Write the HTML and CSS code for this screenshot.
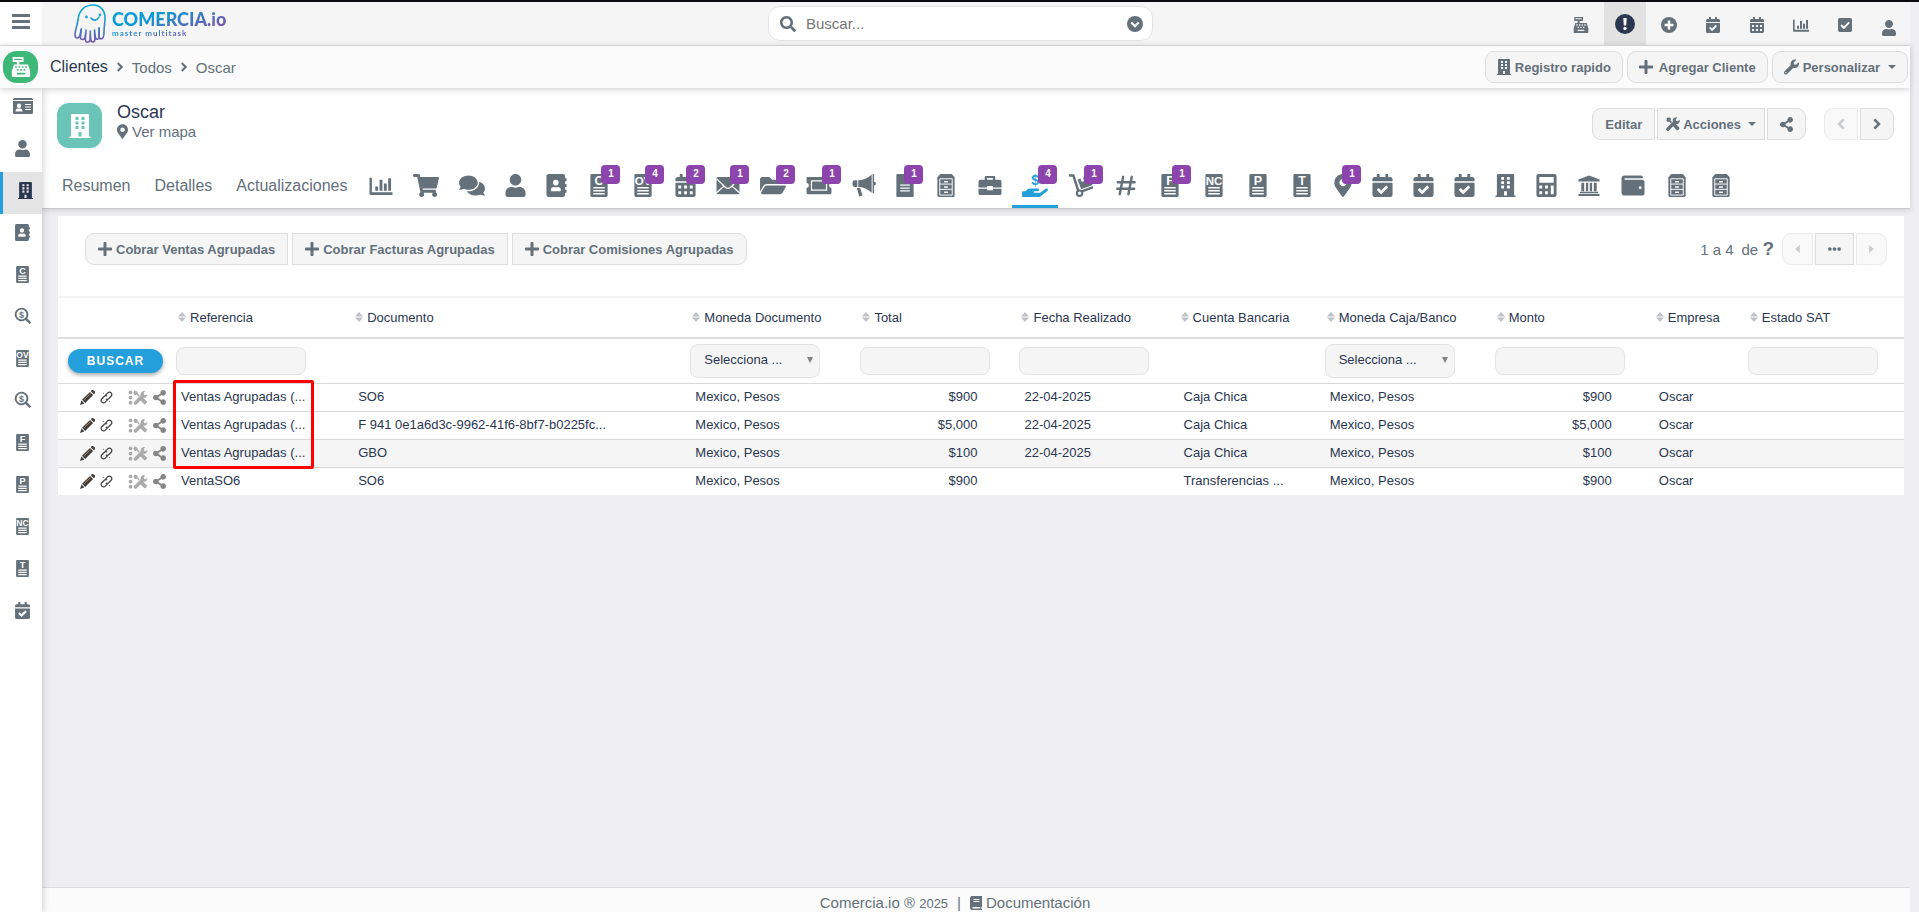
FILE: index.html
```html
<!DOCTYPE html>
<html lang="es">
<head>
<meta charset="UTF-8">
<meta name="viewport" content="width=device-width, initial-scale=1">
<title>Oscar - Clientes</title>
<link rel="stylesheet" href="styles.css">
</head>
<body>

<!-- icon sprite -->
<svg class="sprite" aria-hidden="true">
    <defs>
        <linearGradient id="logo-grad" gradientUnits="userSpaceOnUse" x1="0" y1="0" x2="0" y2="40">
            <stop offset="0.3" stop-color="#12a5dc"/>
            <stop offset="1" stop-color="#7a4fa8"/>
        </linearGradient>
    </defs>
    <symbol id="i-bars" viewBox="0 0 18 16"><path d="M1 0h16a1 1 0 0 1 0 3H1a1 1 0 0 1 0-3zm0 6h16a1 1 0 0 1 0 3H1a1 1 0 0 1 0-3zm0 6h16a1 1 0 0 1 0 3H1a1 1 0 0 1 0-3z"/></symbol>
    <symbol id="i-search" viewBox="0 0 512 512"><path d="M505 442.700L405.300 343c-4.500-4.500-10.600-7-17-7H372c27.600-35.300 44-79.700 44-128C416 93.100 322.900 0 208 0S0 93.100 0 208s93.100 208 208 208c48.300 0 92.700-16.400 128-44v16.300c0 6.400 2.500 12.500 7 17l99.700 99.700c9.400 9.400 24.600 9.400 33.900 0l28.300-28.300c9.400-9.400 9.400-24.600.1-34zM208 336c-70.700 0-128-57.200-128-128 0-70.700 57.200-128 128-128 70.700 0 128 57.200 128 128 0 70.700-57.200 128-128 128z"/></symbol>
    <symbol id="i-search-dollar" viewBox="0 0 24 24"><path d="M10 1a9 9 0 1 0 5.200 16.300l5.600 5.500 2.200-2.200-5.500-5.500A9 9 0 0 0 10 1zm0 2.400a6.600 6.600 0 1 1 0 13.200 6.600 6.600 0 0 1 0-13.200z"/><text x="10" y="14" font-size="12" font-weight="bold" text-anchor="middle">$</text></symbol>
    <symbol id="i-chevron-circle" viewBox="0 0 16 16"><circle cx="8" cy="8" r="8"/><path d="M4.300 6.500L8 10.200l3.700-3.700" fill="none" stroke="#fff" stroke-width="2.200"/></symbol>
    <symbol id="i-register" viewBox="0 0 24 24"><path fill-rule="evenodd" d="M2 0h13v6H10v3h10.500l2.500 8v6a1 1 0 0 1-1 1H2a1 1 0 0 1-1-1v-6l2.500-8H7V6H2zM4 2v1.500h9V2zM5 11v2h2v-2zm4 0v2h2v-2zm4 0v2h2v-2zm4 0v2h2v-2zM7 14.500v2h2v-2zm4 0v2h2v-2zm4 0v2h2v-2zM7 19v2h10v-2z"/></symbol>
    <symbol id="i-alert" viewBox="0 0 20 20"><circle cx="10" cy="10" r="10"/><path d="M8.300 4h3.400l-.5 7.500H8.800z" fill="#fff"/><circle cx="10" cy="14.500" r="1.700" fill="#fff"/></symbol>
    <symbol id="i-plus-circle" viewBox="0 0 16 16"><circle cx="8" cy="8" r="8"/><path d="M8 3.600v8.800M3.600 8h8.800" stroke="#fff" stroke-width="2.400"/></symbol>
    <symbol id="i-plus" viewBox="0 0 448 512"><path d="M416 208H272V64c0-17.670-14.330-32-32-32h-32c-17.670 0-32 14.330-32 32v144H32c-17.670 0-32 14.330-32 32v32c0 17.670 14.330 32 32 32h144v144c0 17.670 14.330 32 32 32h32c17.670 0 32-14.330 32-32V304h144c17.670 0 32-14.330 32-32v-32c0-17.670-14.330-32-32-32z"/></symbol>
    <symbol id="i-calendar-check" viewBox="0 0 448 512"><path d="M436 160H12c-6.600 0-12-5.400-12-12v-36c0-26.500 21.500-48 48-48h48V12c0-6.600 5.400-12 12-12h40c6.600 0 12 5.400 12 12v52h128V12c0-6.600 5.400-12 12-12h40c6.600 0 12 5.400 12 12v52h48c26.500 0 48 21.500 48 48v36c0 6.600-5.400 12-12 12zM12 192h424c6.600 0 12 5.400 12 12v260c0 26.500-21.500 48-48 48H48c-26.500 0-48-21.500-48-48V204c0-6.600 5.400-12 12-12zm333.300 95.900l-28.200-28.400c-4.700-4.700-12.300-4.700-17 0L194.100 364.700l-46-46.400c-4.700-4.700-12.300-4.700-17 0l-28.400 28.200c-4.700 4.700-4.700 12.300 0 17l82.600 83.300c4.700 4.700 12.300 4.700 17 0l143-141.800c4.700-4.700 4.700-12.300 0-17z"/></symbol>
    <symbol id="i-calendar" viewBox="0 0 448 512"><path fill-rule="evenodd" d="M436 160H12c-6.600 0-12-5.400-12-12v-36c0-26.500 21.500-48 48-48h48V12c0-6.600 5.400-12 12-12h40c6.600 0 12 5.400 12 12v52h128V12c0-6.600 5.400-12 12-12h40c6.600 0 12 5.400 12 12v52h48c26.500 0 48 21.500 48 48v36c0 6.600-5.400 12-12 12zM0 192h448v272c0 26.500-21.500 48-48 48H48c-26.500 0-48-21.500-48-48zM64 256v64h64v-64zm128 0v64h64v-64zm128 0v64h64v-64zM64 384v64h64v-64zm128 0v64h64v-64zm128 0v64h64v-64z"/></symbol>
    <symbol id="i-chart" viewBox="0 0 24 24"><path d="M0 4h2.500v15H24v3H1.500A1.500 1.500 0 0 1 0 20.500zM6 13h3v4.500H6zM10.500 6h3v11.500h-3zM15 10h3v7.500h-3zM19.500 4.500h3v13h-3z"/></symbol>
    <symbol id="i-check-square" viewBox="0 0 16 16"><rect width="16" height="16" rx="2"/><path d="M3.500 8l3.200 3.200 6-6.200" fill="none" stroke="#fff" stroke-width="2.200"/></symbol>
    <symbol id="i-user" viewBox="0 0 448 512"><path d="M224 256c70.700 0 128-57.300 128-128S294.700 0 224 0 96 57.300 96 128s57.300 128 128 128zm89.600 32h-16.700c-22.200 10.200-46.900 16-72.900 16s-50.600-5.800-72.900-16h-16.700C60.200 288 0 348.200 0 422.400V464c0 26.500 21.500 48 48 48h352c26.500 0 48-21.500 48-48v-41.600c0-74.200-60.200-134.400-134.400-134.400z"/></symbol>
    <symbol id="i-id-card" viewBox="0 0 20 16"><path fill-rule="evenodd" d="M1.500 0h17A1.500 1.500 0 0 1 20 1.500V2H0v-.5A1.500 1.500 0 0 1 1.500 0zM0 3h20v11.500a1.500 1.500 0 0 1-1.500 1.500h-17A1.500 1.500 0 0 1 0 14.500zM6 5.500a2.200 2.200 0 1 0 0 4.400 2.200 2.200 0 0 0 0-4.400zM2.500 13.500h7c0-2-1-3-2-3h-3c-1 0-2 1-2 3zM12 6v1h6V6zm0 2.500v1h6v-1zm0 2.500v1h6v-1z"/></symbol>
    <symbol id="i-building" viewBox="0 0 448 512"><path fill-rule="evenodd" d="M436 480h-20V24c0-13.300-10.700-24-24-24H56C42.700 0 32 10.700 32 24v456H12c-6.600 0-12 5.400-12 12v20h448v-20c0-6.600-5.400-12-12-12zM128 64h64v64h-64zM256 64h64v64h-64zM128 160h64v64h-64zM256 160h64v64h-64zM128 256h64v64h-64zM256 256h64v64h-64zM192 384h64v96h-64z"/></symbol>
    <symbol id="i-address-book" viewBox="0 0 448 512"><path d="M436 160c6.600 0 12-5.400 12-12v-40c0-6.600-5.400-12-12-12h-20V48c0-26.500-21.500-48-48-48H48C21.500 0 0 21.500 0 48v416c0 26.500 21.500 48 48 48h320c26.500 0 48-21.500 48-48v-48h20c6.600 0 12-5.400 12-12v-40c0-6.600-5.400-12-12-12h-20v-64h20c6.600 0 12-5.400 12-12v-40c0-6.600-5.400-12-12-12h-20v-64h20zm-228-32c35.300 0 64 28.700 64 64s-28.700 64-64 64-64-28.700-64-64 28.700-64 64-64zm112 236.800c0 10.600-10 19.200-22.400 19.200H118.400C106 384 96 375.400 96 364.800v-19.200c0-31.800 30.100-57.600 67.200-57.600h5c12.300 5.100 25.700 8 39.800 8s27.600-2.900 39.800-8h5c37.100 0 67.200 25.800 67.200 57.600v19.200z"/></symbol>
    <symbol id="i-doc" viewBox="0 0 24 24"><path fill-rule="evenodd" d="M4.500 0h15A1.500 1.500 0 0 1 21 1.500v21a1.500 1.500 0 0 1-1.500 1.500h-15A1.500 1.500 0 0 1 3 22.500v-21A1.500 1.500 0 0 1 4.500 0zM6 13.500v1.600h12v-1.600zm0 3.200v1.600h12v-1.600zm0 3.200v1.600h12v-1.600z"/></symbol>
    <symbol id="i-file" viewBox="0 0 18 24"><path fill-rule="evenodd" d="M1 0h11v6h6v17a1 1 0 0 1-1 1H1a1 1 0 0 1-1-1V1a1 1 0 0 1 1-1zM4 11v1.300h10V11zm0 3v1.300h10V14zm0 3v1.300h10V17z"/></symbol>
    <symbol id="i-cart" viewBox="0 0 576 512"><path d="M528.100 301.300l47.300-208C578.800 78.300 567.400 64 552 64H159.200l-9.200-44.800C147.800 8 137.900 0 126.500 0H24C10.700 0 0 10.700 0 24v16c0 13.300 10.700 24 24 24h69.900l70.200 343.400C147.300 417.100 136 435.200 136 456c0 30.900 25.100 56 56 56s56-25.100 56-56c0-15.700-6.400-29.800-16.800-40h209.600C430.400 426.200 424 440.300 424 456c0 30.900 25.100 56 56 56s56-25.100 56-56c0-22.200-12.900-41.300-31.600-50.400l5.500-24.300c3.400-15-8-29.300-23.400-29.300H218.100l-6.500-32h293.100c11.200 0 20.900-7.800 23.400-18.700z"/></symbol>
    <symbol id="i-comments" viewBox="0 0 576 512"><path d="M416 192c0-88.400-93.100-160-208-160S0 103.600 0 192c0 34.300 14.100 65.900 38 92-13.400 30.200-35.500 54.200-35.800 54.500-2.200 2.300-2.800 5.700-1.500 8.700S4.800 352 8 352c36.600 0 66.900-12.300 88.700-25 32.200 15.700 70.300 25 111.300 25 114.900 0 208-71.600 208-160zm122 220c23.900-26 38-57.700 38-92 0-66.900-53.500-124.200-129.300-148.100.9 6.600 1.300 13.300 1.300 20.100 0 105.900-107.700 192-240 192-10.800 0-21.300-.8-31.700-1.900C207.800 439.600 281.800 480 368 480c41 0 79.100-9.200 111.300-25 21.800 12.700 52.100 25 88.700 25 3.200 0 6.100-1.900 7.300-4.800 1.300-2.900.7-6.300-1.500-8.700-.3-.3-22.400-24.200-35.800-54.500z"/></symbol>
    <symbol id="i-mail" viewBox="0 0 24 24"><rect y="3" width="24" height="18" rx="1.500"/><path d="M0 5l9 8.500c2 2 4 2 6 0L24 5M0 19.500l8-7M24 19.500l-8-7" fill="none" stroke="#fff" stroke-width="1.300"/></symbol>
    <symbol id="i-folder" viewBox="0 0 576 512"><path d="M572.700 292.100L500.300 416.200A64 64 0 0 1 445 448H45c-18.500 0-30-20.100-20.700-36.100l72.400-124.200A64 64 0 0 1 152 256h400c18.500 0 30 20.100 20.700 36.100zM152 224h328v-48c0-26.500-21.500-48-48-48H272l-64-64H48C21.500 64 0 85.500 0 112v278l69.100-118.400C86.200 242.200 118 224 152 224z"/></symbol>
    <symbol id="i-ticket" viewBox="0 0 26 24"><path fill-rule="evenodd" d="M1.500 3h23A1.500 1.500 0 0 1 26 4.500V9.500a2.500 2.500 0 0 0 0 5v5a1.500 1.500 0 0 1-1.500 1.500h-23A1.500 1.500 0 0 1 0 19.500v-5a2.500 2.500 0 0 0 0-5V4.500A1.500 1.500 0 0 1 1.500 3zM4.500 6.500v11h17v-11zM6 8h14v8H6z"/><path d="M6 8h14v8H6z"/></symbol>
    <symbol id="i-bullhorn" viewBox="0 0 24 24"><path d="M5 6.500v7H2.500A2.500 2.500 0 0 1 0 11V9a2.500 2.500 0 0 1 2.500-2.500zM6 6.500c5 0 10-2 14-6v19c-4-4-9-6-14-6zM21 0h1.500v8a2 2 0 0 1 0 4v8H21zM4.500 14.500H8l2.500 8-3.500 1z"/></symbol>
    <symbol id="i-cabinet" viewBox="0 0 24 24"><path d="M6 0h12l3 3.500V23l-1 1H4l-1-1V3.500z"/><path d="M5.500 5h13v17h-13zM5.500 10.500h13M5.500 16h13" fill="none" stroke="#fff" stroke-width="1"/><path d="M10 8h4M10 13.500h4M10 19h4" stroke="#fff" stroke-width="1.500"/></symbol>
    <symbol id="i-briefcase" viewBox="0 0 24 24"><path fill-rule="evenodd" d="M8 2h8a1.500 1.500 0 0 1 1.500 1.500V6H22a2 2 0 0 1 2 2v6h-9v-1.500H9V14H0V8a2 2 0 0 1 2-2h4.500V3.500A1.500 1.500 0 0 1 8 2zm1 2.200V6h6V4.200zM0 15.500h9V17h6v-1.500h9V20a2 2 0 0 1-2 2H2a2 2 0 0 1-2-2z"/></symbol>
    <symbol id="i-hand" viewBox="0 0 576 512"><path d="M565.300 328.100c-11.800-10.700-30.200-10-42.600 0L430.300 402c-11.300 9.100-25.400 14-40 14H272c-8.800 0-16-7.200-16-16s7.200-16 16-16h78.300c15.900 0 30.700-10.900 33.300-26.600 3.300-20-12.100-37.400-31.600-37.400H192c-27 0-53.100 9.300-74.100 26.300L71.400 384H16c-8.800 0-16 7.200-16 16v96c0 8.800 7.200 16 16 16h356.800c14.500 0 28.600-4.900 40-14L564 377c15.200-12.100 16.400-35.300 1.300-48.900z"/><text x="290" y="246" font-size="310" font-weight="bold" text-anchor="middle">$</text></symbol>
    <symbol id="i-dolly" viewBox="0 0 26 24"><path d="M1.500 1.500H5l5 15.500" fill="none" stroke="currentColor" stroke-width="2.600" stroke-linecap="round" stroke-linejoin="round"/><circle cx="11.500" cy="20" r="2.800" fill="none" stroke="currentColor" stroke-width="2.200"/><path d="M14.500 17.800l10-3.600" fill="none" stroke="currentColor" stroke-width="2.500" stroke-linecap="round"/><path d="M9.500 6l3-1.200 1.300 3.500 2.500-.9-1.300-3.500L21 1.500l4 10L13.200 16z"/></symbol>
    <symbol id="i-hash" viewBox="0 0 21 24"><path d="M7.500 3L4 21M16.500 3L13 21M2 8.500h17.500M1.500 15.500H19" fill="none" stroke="currentColor" stroke-width="2.600" stroke-linecap="round"/></symbol>
    <symbol id="i-pin" viewBox="0 0 384 512"><path d="M172.300 501.700C27 291 0 269.400 0 192 0 86 86 0 192 0s192 86 192 192c0 77.400-27 99-172.300 309.700-9.500 13.800-29.900 13.800-39.400 0zM192 272c44.200 0 80-35.800 80-80s-35.800-80-80-80-80 35.800-80 80 35.800 80 80 80z"/></symbol>
    <symbol id="i-calculator" viewBox="0 0 21 24"><path fill-rule="evenodd" d="M2 0h17a2 2 0 0 1 2 2v20a2 2 0 0 1-2 2H2a2 2 0 0 1-2-2V2a2 2 0 0 1 2-2zm1 3v6h15V3zM3 12v3h3v-3zm6 0v3h3v-3zm6 0v9h3v-9zM3 18v3h3v-3zm6 0v3h3v-3z"/></symbol>
    <symbol id="i-bank" viewBox="0 0 24 24"><path d="M12 1.500l11 4.200v2.100H1V5.700zM4 9h3v9H4zM8.800 9h2.400v9H8.800zM12.800 9h2.400v9h-2.400zM17 9h3v9h-3zM2.500 18.500h19V20h-19zM1 20.800h22v2.200H1z"/></symbol>
    <symbol id="i-wallet" viewBox="0 0 512 512"><path d="M461.200 128H80c-8.800 0-16-7.200-16-16s7.200-16 16-16h384c8.800 0 16-7.200 16-16 0-26.500-21.500-48-48-48H64C28.700 32 0 60.700 0 96v320c0 35.300 28.700 64 64 64h397.200c28 0 50.800-21.500 50.800-48V176c0-26.500-22.800-48-50.800-48zM416 336c-17.700 0-32-14.300-32-32s14.300-32 32-32 32 14.300 32 32-14.300 32-32 32z"/></symbol>
    <symbol id="i-wrench" viewBox="0 0 512 512"><path d="M507.700 109.100c-2.200-9-13.500-12.100-20.100-5.500l-74.400 74.400-67.900-11.300-11.300-67.900 74.400-74.400c6.600-6.600 3.400-17.900-5.700-20.200-47.400-11.700-99.600.9-136.600 37.900-39.600 39.600-50.500 97.100-34 147.200L18.700 402.800c-25 25-25 65.500 0 90.500s65.500 25 90.500 0l213.200-213.200c50.100 16.700 107.500 5.700 147.400-34.200 37.100-37.100 49.700-89.300 37.900-136.800zM64 472c-13.200 0-24-10.700-24-24 0-13.300 10.700-24 24-24s24 10.700 24 24c0 13.200-10.700 24-24 24z"/></symbol>
    <symbol id="i-tools" viewBox="0 0 16 16"><path d="M1.600.6L6.900 5.800 5.700 7 .5 1.700zM9 8.200l1.200-1 5 4.800c.9 1-1.700 4-2.900 3l-4.600-5z"/><path d="M15.600 3.200l-2.200 1.600-1.900-.4-.4-1.900L12.800.4a4 4 0 0 0-4.900 5L.8 12.600a1.900 1.900 0 0 0 2.700 2.700l7.100-7.200a4 4 0 0 0 5-4.900z"/><path d="M.3 3.300L3.300.3 5.500 1.500v2L3.700 5.300H1.600z"/></symbol>
    <symbol id="i-share" viewBox="0 0 448 512"><path d="M352 320c-22.600 0-43.400 7.800-59.800 20.900l-102.500-64.100a96.600 96.600 0 0 0 0-41.600l102.500-64.100C308.600 184.200 329.400 192 352 192c53 0 96-43 96-96S405 0 352 0s-96 43-96 96c0 7.200.8 14.100 2.300 20.800L155.800 180.900C139.400 167.800 118.600 160 96 160c-53 0-96 43-96 96s43 96 96 96c22.600 0 43.400-7.800 59.800-20.900l102.500 64.100A96.300 96.300 0 0 0 256 416c0 53 43 96 96 96s96-43 96-96-43-96-96-96z"/></symbol>
    <symbol id="i-right" viewBox="0 0 8 12"><path d="M1.300 1.300L6 6l-4.700 4.700" fill="none" stroke="currentColor" stroke-width="2.500"/></symbol>
    <symbol id="i-left" viewBox="0 0 8 12"><path d="M6.700 1.300L2 6l4.700 4.700" fill="none" stroke="currentColor" stroke-width="2.500"/></symbol>
    <symbol id="i-caret-left" viewBox="0 0 6 10"><path d="M6 0v10L0 5z"/></symbol>
    <symbol id="i-caret-right" viewBox="0 0 6 10"><path d="M0 0v10l6-5z"/></symbol>
    <symbol id="i-dots" viewBox="0 0 14 4"><circle cx="2" cy="2" r="2"/><circle cx="7" cy="2" r="2"/><circle cx="12" cy="2" r="2"/></symbol>
    <symbol id="i-sort" viewBox="0 0 8 10"><path d="M4 0l4 4.500H0zM4 10L0 5.500h8z"/></symbol>
    <symbol id="i-book" viewBox="0 0 12 14"><path fill-rule="evenodd" d="M2.500 0H12v10.500l-.7.500v1.500l.7.500v1H2.500A2.300 2.300 0 0 1 0 11.700V2.300A2.300 2.300 0 0 1 2.500 0zM3.500 3v1h6V3zm0 2v1h6V5zM2.500 11v1.500h7.700V11z"/></symbol>
    <symbol id="i-pencil" viewBox="0 0 16 16"><path d="M11.500 1.200l1-1a1.400 1.400 0 0 1 1.800 0l1.500 1.500c.4.500.4 1.200 0 1.700l-1 1z"/><path d="M10.700 2l3.300 3.300-8.500 8.600-3.400-3.400z"/><path d="M1.600 11.300l3.100 3.100L0 16z"/><path d="M3.800 11.200l7.600-7.500" stroke="#b98b6a" stroke-width="1"/></symbol>
    <symbol id="i-link" viewBox="0 0 14 14"><path d="M6 4.500L8.300 2a2.600 2.600 0 0 1 3.700 0 2.600 2.600 0 0 1 0 3.700L9.300 8.400a2.300 2.300 0 0 1-2.600.4M8 9.500L5.700 12A2.600 2.600 0 0 1 2 12a2.600 2.600 0 0 1 0-3.700l2.700-2.700a2.300 2.300 0 0 1 2.600-.4" fill="none" stroke="currentColor" stroke-width="1.300" stroke-linecap="round"/><path d="M3.500 2l.7 1.200M10.500 12l-.7-1.200" stroke="currentColor" stroke-width=".8"/></symbol>
    <symbol id="i-list-tools" viewBox="0 0 20 16"><circle cx="2" cy="2.500" r="2"/><circle cx="2" cy="8" r="2"/><circle cx="2" cy="13.500" r="2"/><path d="M6.600.6l5.300 5.200L10.700 7 5.500 1.700zM13 9.200l1.800-1.600 4.600 4.400c.9 1-1.700 4-2.900 3l-4.600-4.700z"/><path d="M20 4.200l-1.800 1.400-1.700-.5-.4-1.700L17.600 1.400a3.600 3.600 0 0 0-4.700 4.300L6 12.600a1.800 1.800 0 0 0 2.600 2.600l7-7A3.600 3.600 0 0 0 20 4.200zM5 3l2.500-2.500L9.500 2v1.500L8 5.200H6.500z"/></symbol>
</svg>

<header class="topbar">
    <div class="topbar-left">
        <button class="menu-btn" aria-label="Menú"><svg width="18" height="16"><use href="#i-bars"/></svg></button>
        <a class="logo" href="#">
            <svg width="32" height="40" viewBox="0 0 32 40">
                <path d="M4 16C5 5 12 1 19 1c8 0 12 6 12 13 0 6-1 8-1 14 0 5-1 7-3 7s-2-3-2-7v-4"/>
                <path d="M4 16c-1 6-3 11-3 15 0 2 1 3 2.500 3S6 32 6.500 29l.8-4"/>
                <path d="M7.300 25c-.5 4-.8 6-.8 8.500s4 3 4.500-.5l1-6M12 26c0 5-1 8-.5 10.500s4 2.500 4.500-.5l.3-9M16.300 27c0 4 .2 6 .5 9 .5 3 4 2.500 4-.5l-.3-9M20.500 26c.5 3 .5 5 1 7.500s3.500 2 3.500 0V24"/>
                <path d="M17 14c2 3 6 3 8-1"/>
                <circle cx="12.500" cy="13" r=".6"/>
                <circle cx="26" cy="11" r=".6"/>
            </svg>
            <span class="logo-text">
                <strong>COMERCIA.io</strong>
                <small>master multitask</small>
            </span>
        </a>
    </div>
    <form class="search">
        <svg width="16" height="16"><use href="#i-search"/></svg>
        <input type="text" placeholder="Buscar..." aria-label="Buscar">
        <button type="button" aria-label="Opciones de búsqueda"><svg width="16" height="16"><use href="#i-chevron-circle"/></svg></button>
    </form>
    <nav class="top-icons">
        <a href="#" aria-label="Caja"><svg width="16" height="16"><use href="#i-register"/></svg></a>
        <a href="#" class="active" aria-label="Avisos"><svg width="20" height="20"><use href="#i-alert"/></svg></a>
        <a href="#" aria-label="Nuevo"><svg width="16" height="16"><use href="#i-plus-circle"/></svg></a>
        <a href="#" aria-label="Tareas"><svg width="14" height="16"><use href="#i-calendar-check"/></svg></a>
        <a href="#" aria-label="Calendario"><svg width="14" height="16"><use href="#i-calendar"/></svg></a>
        <a href="#" aria-label="Reportes"><svg width="16" height="16"><use href="#i-chart"/></svg></a>
        <a href="#" aria-label="Pendientes"><svg width="14" height="14"><use href="#i-check-square"/></svg></a>
        <a href="#" class="profile" aria-label="Perfil"><svg width="14" height="16"><use href="#i-user"/></svg></a>
    </nav>
</header>

<div class="crumbbar">
    <a class="pos-btn" href="#" aria-label="Punto de venta"><svg width="20" height="20"><use href="#i-register"/></svg></a>
    <nav class="crumbs">
        <a class="module" href="#">Clientes</a>
        <svg width="8" height="10"><use href="#i-right"/></svg>
        <a href="#">Todos</a>
        <svg width="8" height="10"><use href="#i-right"/></svg>
        <span>Oscar</span>
    </nav>
    <div class="crumb-actions">
        <button class="btn round"><svg width="14" height="16"><use href="#i-building"/></svg>Registro rapido</button>
        <button class="btn round wide"><svg width="14" height="16"><use href="#i-plus"/></svg>Agregar Cliente</button>
        <button class="btn round"><svg width="15" height="16"><use href="#i-wrench"/></svg>Personalizar<i class="caret"></i></button>
    </div>
</div>

<div class="layout">
    <nav class="sidebar">
        <a href="#" aria-label="Contactos"><svg width="20" height="16"><use href="#i-id-card"/></svg></a>
        <a href="#" aria-label="Usuarios"><svg width="15" height="17"><use href="#i-user"/></svg></a>
        <a href="#" class="active" aria-label="Clientes"><svg width="15" height="17"><use href="#i-building"/></svg></a>
        <a href="#" aria-label="Agenda"><svg width="15" height="17"><use href="#i-address-book"/></svg></a>
        <a href="#"><svg width="17" height="17" viewBox="0 0 24 24"><use href="#i-doc"/><text class="doc-letter" x="12" y="11">C</text></svg></a>
        <a href="#" aria-label="Buscar ventas"><svg width="18" height="18"><use href="#i-search-dollar"/></svg></a>
        <a href="#"><svg width="17" height="17" viewBox="0 0 24 24"><use href="#i-doc"/><text class="doc-letter pair" x="12" y="11">OV</text></svg></a>
        <a href="#" aria-label="Buscar pagos"><svg width="18" height="18"><use href="#i-search-dollar"/></svg></a>
        <a href="#"><svg width="17" height="17" viewBox="0 0 24 24"><use href="#i-doc"/><text class="doc-letter" x="12" y="11">F</text></svg></a>
        <a href="#"><svg width="17" height="17" viewBox="0 0 24 24"><use href="#i-doc"/><text class="doc-letter" x="12" y="11">P</text></svg></a>
        <a href="#"><svg width="17" height="17" viewBox="0 0 24 24"><use href="#i-doc"/><text class="doc-letter pair" x="12" y="11">NC</text></svg></a>
        <a href="#"><svg width="17" height="17" viewBox="0 0 24 24"><use href="#i-doc"/><text class="doc-letter" x="12" y="11">T</text></svg></a>
        <a href="#" aria-label="Tareas"><svg width="15" height="17"><use href="#i-calendar-check"/></svg></a>
    </nav>

    <main class="content">
        <section class="record">
            <div class="record-top">
                <div class="avatar"><svg width="22" height="24"><use href="#i-building"/></svg></div>
                <div class="record-name">
                    <h1>Oscar</h1>
                    <a href="#"><svg width="11" height="15"><use href="#i-pin"/></svg>Ver mapa</a>
                </div>
                <div class="record-actions">
                    <div class="btn-group">
                        <button class="btn">Editar</button>
                        <button class="btn tight"><svg width="14" height="14"><use href="#i-tools"/></svg>Acciones<i class="caret"></i></button>
                        <button class="btn" aria-label="Compartir"><svg width="13" height="15"><use href="#i-share"/></svg></button>
                    </div>
                    <div class="btn-group">
                        <button class="btn" disabled aria-label="Anterior"><svg width="8" height="12"><use href="#i-left"/></svg></button>
                        <button class="btn" aria-label="Siguiente"><svg width="8" height="12"><use href="#i-right"/></svg></button>
                    </div>
                </div>
            </div>

            <nav class="tabs">
                <a class="text" href="#">Resumen</a>
                <a class="text" href="#">Detalles</a>
                <a class="text" href="#">Actualizaciones</a>
                <a href="#" aria-label="Reportes"><svg class="m"><use href="#i-chart"/></svg></a>
                <a href="#" aria-label="Productos"><svg class="l"><use href="#i-cart"/></svg></a>
                <a href="#" aria-label="Comentarios"><svg class="l"><use href="#i-comments"/></svg></a>
                <a href="#" aria-label="Usuarios"><svg class="s"><use href="#i-user"/></svg></a>
                <a href="#" aria-label="Contactos"><svg class="s"><use href="#i-address-book"/></svg></a>
                <a href="#"><svg class="m" viewBox="0 0 24 24"><use href="#i-doc"/><text class="doc-letter" x="12" y="11">C</text></svg><span class="badge">1</span></a>
                <a href="#"><svg class="m" viewBox="0 0 24 24"><use href="#i-doc"/><text class="doc-letter pair" x="12" y="11">OV</text></svg><span class="badge">4</span></a>
                <a href="#" aria-label="Calendario"><svg class="s"><use href="#i-calendar"/></svg><span class="badge">2</span></a>
                <a href="#" aria-label="Correos"><svg class="m"><use href="#i-mail"/></svg><span class="badge">1</span></a>
                <a href="#" aria-label="Documentos"><svg class="l"><use href="#i-folder"/></svg><span class="badge">2</span></a>
                <a href="#" aria-label="Tickets"><svg class="l"><use href="#i-ticket"/></svg><span class="badge">1</span></a>
                <a href="#" aria-label="Campañas"><svg class="m"><use href="#i-bullhorn"/></svg></a>
                <a href="#" aria-label="Contratos"><svg class="xs"><use href="#i-file"/></svg><span class="badge">1</span></a>
                <a href="#" aria-label="Archivo"><svg class="m"><use href="#i-cabinet"/></svg></a>
                <a href="#" aria-label="Proyectos"><svg class="m"><use href="#i-briefcase"/></svg></a>
                <a href="#" class="active" aria-label="Cobros"><svg class="l"><use href="#i-hand"/></svg><span class="badge">4</span></a>
                <a href="#" aria-label="Entregas"><svg class="l"><use href="#i-dolly"/></svg><span class="badge">1</span></a>
                <a href="#" aria-label="Series"><svg class="m"><use href="#i-hash"/></svg></a>
                <a href="#"><svg class="m" viewBox="0 0 24 24"><use href="#i-doc"/><text class="doc-letter" x="12" y="11">F</text></svg><span class="badge">1</span></a>
                <a href="#"><svg class="m" viewBox="0 0 24 24"><use href="#i-doc"/><text class="doc-letter pair" x="12" y="11">NC</text></svg></a>
                <a href="#"><svg class="m" viewBox="0 0 24 24"><use href="#i-doc"/><text class="doc-letter" x="12" y="11">P</text></svg></a>
                <a href="#"><svg class="m" viewBox="0 0 24 24"><use href="#i-doc"/><text class="doc-letter" x="12" y="11">T</text></svg></a>
                <a href="#" aria-label="Direcciones"><svg class="xs"><use href="#i-pin"/></svg><span class="badge">1</span></a>
                <a href="#" aria-label="Tareas"><svg class="s"><use href="#i-calendar-check"/></svg></a>
                <a href="#" aria-label="Citas"><svg class="s"><use href="#i-calendar-check"/></svg></a>
                <a href="#" aria-label="Eventos"><svg class="s"><use href="#i-calendar-check"/></svg></a>
                <a href="#" aria-label="Sucursales"><svg class="s"><use href="#i-building"/></svg></a>
                <a href="#" aria-label="Cotizador"><svg class="s"><use href="#i-calculator"/></svg></a>
                <a href="#" aria-label="Bancos"><svg class="m"><use href="#i-bank"/></svg></a>
                <a href="#" aria-label="Monedero"><svg class="m"><use href="#i-wallet"/></svg></a>
                <a href="#" aria-label="Archivo"><svg class="m"><use href="#i-cabinet"/></svg></a>
                <a href="#" aria-label="Archivo"><svg class="m"><use href="#i-cabinet"/></svg></a>
            </nav>
        </section>

        <section class="card">
            <div class="card-tools">
                <div class="btn-group spaced">
                    <button class="btn"><svg width="14" height="16"><use href="#i-plus"/></svg>Cobrar Ventas Agrupadas</button>
                    <button class="btn"><svg width="14" height="16"><use href="#i-plus"/></svg>Cobrar Facturas Agrupadas</button>
                    <button class="btn"><svg width="14" height="16"><use href="#i-plus"/></svg>Cobrar Comisiones Agrupadas</button>
                </div>
                <div class="pager">
                    <span>1 a 4</span>
                    <span>de <b>?</b></span>
                    <div class="btn-group">
                        <button class="btn" disabled aria-label="Página anterior"><svg width="5" height="8"><use href="#i-caret-left"/></svg></button>
                        <button class="btn" aria-label="Ir a página"><svg width="13" height="4"><use href="#i-dots"/></svg></button>
                        <button class="btn" disabled aria-label="Página siguiente"><svg width="5" height="8"><use href="#i-caret-right"/></svg></button>
                    </div>
                </div>
            </div>

            <table>
                <colgroup>
                    <col class="c-actions"><col class="c-ref"><col class="c-doc"><col class="c-cur"><col class="c-std"><col class="c-std"><col class="c-acc"><col class="c-cur"><col class="c-std"><col class="c-emp"><col class="c-std">
                </colgroup>
                <thead>
                    <tr>
                        <th></th>
                        <th><svg width="8" height="10"><use href="#i-sort"/></svg>Referencia</th>
                        <th><svg width="8" height="10"><use href="#i-sort"/></svg>Documento</th>
                        <th><svg width="8" height="10"><use href="#i-sort"/></svg>Moneda Documento</th>
                        <th><svg width="8" height="10"><use href="#i-sort"/></svg>Total</th>
                        <th><svg width="8" height="10"><use href="#i-sort"/></svg>Fecha Realizado</th>
                        <th><svg width="8" height="10"><use href="#i-sort"/></svg>Cuenta Bancaria</th>
                        <th><svg width="8" height="10"><use href="#i-sort"/></svg>Moneda Caja/Banco</th>
                        <th><svg width="8" height="10"><use href="#i-sort"/></svg>Monto</th>
                        <th><svg width="8" height="10"><use href="#i-sort"/></svg>Empresa</th>
                        <th><svg width="8" height="10"><use href="#i-sort"/></svg>Estado SAT</th>
                    </tr>
                    <tr class="filters">
                        <td class="go"><button class="search-btn">BUSCAR</button></td>
                        <td><input type="text" aria-label="Referencia"></td>
                        <td></td>
                        <td><span class="select"><select aria-label="Moneda Documento"><option>Selecciona ...</option></select></span></td>
                        <td><input type="text" aria-label="Total"></td>
                        <td><input type="text" aria-label="Fecha Realizado"></td>
                        <td></td>
                        <td><span class="select"><select aria-label="Moneda Caja/Banco"><option>Selecciona ...</option></select></span></td>
                        <td><input type="text" aria-label="Monto"></td>
                        <td></td>
                        <td><input type="text" aria-label="Estado SAT"></td>
                    </tr>
                </thead>
                <tbody>
                    <tr>
                        <td class="row-icons"><a href="#" aria-label="Editar"><svg width="15" height="15"><use href="#i-pencil"/></svg></a><a href="#" aria-label="Desvincular"><svg width="13" height="13"><use href="#i-link"/></svg></a><a class="grey" href="#" aria-label="Acciones"><svg width="20" height="15"><use href="#i-list-tools"/></svg></a><a class="mid" href="#" aria-label="Compartir"><svg width="13" height="15"><use href="#i-share"/></svg></a></td>
                        <td class="marked">Ventas Agrupadas (...<div class="mark"></div></td>
                        <td>SO6</td>
                        <td>Mexico, Pesos</td>
                        <td class="num">$900</td>
                        <td>22-04-2025</td>
                        <td>Caja Chica</td>
                        <td>Mexico, Pesos</td>
                        <td class="num">$900</td>
                        <td>Oscar</td>
                        <td></td>
                    </tr>
                    <tr>
                        <td class="row-icons"><a href="#" aria-label="Editar"><svg width="15" height="15"><use href="#i-pencil"/></svg></a><a href="#" aria-label="Desvincular"><svg width="13" height="13"><use href="#i-link"/></svg></a><a class="grey" href="#" aria-label="Acciones"><svg width="20" height="15"><use href="#i-list-tools"/></svg></a><a class="mid" href="#" aria-label="Compartir"><svg width="13" height="15"><use href="#i-share"/></svg></a></td>
                        <td>Ventas Agrupadas (...</td>
                        <td>F 941 0e1a6d3c-9962-41f6-8bf7-b0225fc...</td>
                        <td>Mexico, Pesos</td>
                        <td class="num">$5,000</td>
                        <td>22-04-2025</td>
                        <td>Caja Chica</td>
                        <td>Mexico, Pesos</td>
                        <td class="num">$5,000</td>
                        <td>Oscar</td>
                        <td></td>
                    </tr>
                    <tr class="hover">
                        <td class="row-icons"><a href="#" aria-label="Editar"><svg width="15" height="15"><use href="#i-pencil"/></svg></a><a href="#" aria-label="Desvincular"><svg width="13" height="13"><use href="#i-link"/></svg></a><a class="grey" href="#" aria-label="Acciones"><svg width="20" height="15"><use href="#i-list-tools"/></svg></a><a class="mid" href="#" aria-label="Compartir"><svg width="13" height="15"><use href="#i-share"/></svg></a></td>
                        <td>Ventas Agrupadas (...</td>
                        <td>GBO</td>
                        <td>Mexico, Pesos</td>
                        <td class="num">$100</td>
                        <td>22-04-2025</td>
                        <td>Caja Chica</td>
                        <td>Mexico, Pesos</td>
                        <td class="num">$100</td>
                        <td>Oscar</td>
                        <td></td>
                    </tr>
                    <tr>
                        <td class="row-icons"><a href="#" aria-label="Editar"><svg width="15" height="15"><use href="#i-pencil"/></svg></a><a href="#" aria-label="Desvincular"><svg width="13" height="13"><use href="#i-link"/></svg></a><a class="grey" href="#" aria-label="Acciones"><svg width="20" height="15"><use href="#i-list-tools"/></svg></a><a class="mid" href="#" aria-label="Compartir"><svg width="13" height="15"><use href="#i-share"/></svg></a></td>
                        <td>VentaSO6</td>
                        <td>SO6</td>
                        <td>Mexico, Pesos</td>
                        <td class="num">$900</td>
                        <td></td>
                        <td>Transferencias ...</td>
                        <td>Mexico, Pesos</td>
                        <td class="num">$900</td>
                        <td>Oscar</td>
                        <td></td>
                    </tr>
                </tbody>
            </table>
        </section>

        <footer class="footer">
            <span>Comercia.io ® <small>2025</small></span>
            <span>|</span>
            <a href="#"><svg width="12" height="14"><use href="#i-book"/></svg>Documentación</a>
        </footer>
    </main>
</div>

</body>
</html>
```
FILE: styles.css
```css
* {
    box-sizing: border-box;
}

html {
    background: #efeef3;
    border-top: 2px solid #0d0a10;
}

body {
    margin: 0;
    padding-right: 9px;
    min-height: calc(100vh - 2px);
    display: flex;
    flex-direction: column;
    font-family: "Liberation Sans", Arial, sans-serif;
    font-size: 13px;
    color: #2b3650;
}

a {
    color: inherit;
    text-decoration: none;
}

svg {
    fill: currentColor;
    flex: none;
}

button, input, select {
    font-family: inherit;
}

.sprite {
    position: absolute;
    width: 0;
    height: 0;
}

.doc-letter {
    fill: #fff;
    font-size: 13px;
    font-weight: bold;
    text-anchor: middle;
}

.doc-letter.pair {
    font-size: 12px;
}

/* top bar */
.topbar {
    display: grid;
    grid-template-columns: 40% 385px 1fr;
    column-gap: 4px;
    align-items: center;
    height: 44px;
    background: #f5f5f5;
    border-bottom: 1px solid #e1e1e1;
    color: #64707a;
}

.topbar-left {
    display: flex;
    height: 43px;
}

.menu-btn {
    width: 42px;
    border: 0;
    background: #fff;
    color: #64707a;
    padding: 0;
}

.logo {
    display: flex;
    align-items: center;
    gap: 6px;
    margin-left: 32px;
}

.logo svg {
    fill: none;
    stroke: url(#logo-grad);
    stroke-width: 1.6;
    stroke-linecap: round;
}

.logo-text {
    display: flex;
    flex-direction: column;
    font-family: Lato, sans-serif;
    background: linear-gradient(160deg, #0b9ad6 30%, #7a55ab 80%);
    background-clip: text;
    -webkit-background-clip: text;
    color: transparent;
}

.logo-text strong {
    font-size: 18px;
    line-height: 18px;
    font-weight: 900;
}

.logo-text small {
    font-size: 8px;
    line-height: 10px;
    font-weight: bold;
    letter-spacing: 1px;
}

.search {
    display: flex;
    align-items: center;
    height: 35px;
    padding: 0 9px 0 11px;
    background: #fff;
    border: 1px solid #e3e3e3;
    border-radius: 12px;
}

.search input {
    flex: 1;
    border: 0;
    outline: 0;
    padding: 0 10px;
    font-size: 15px;
    background: none;
}

.search input::placeholder {
    color: #757575;
}

.search button {
    display: flex;
    border: 0;
    padding: 0;
    background: none;
    color: #64707a;
}

.top-icons {
    display: flex;
    justify-content: flex-end;
    gap: 2px;
    height: 43px;
}

.top-icons a {
    width: 42px;
    display: flex;
    align-items: center;
    justify-content: center;
    padding-top: 2px;
}

.top-icons .active {
    background: #e2e2e2;
    color: #2b3650;
    padding: 0;
}

.top-icons .profile {
    padding-top: 8px;
}

/* breadcrumb bar */
.crumbbar {
    display: flex;
    align-items: center;
    height: 42px;
    padding: 0 2px 0 3px;
    background: #fbfbfb;
    box-shadow: 0 1px 7px rgba(0, 0, 0, .2);
    color: #64707a;
    z-index: 3;
}

.pos-btn {
    display: flex;
    align-items: center;
    justify-content: center;
    width: 35px;
    height: 32px;
    border-radius: 14px;
    background: #3db878;
    color: #fff;
}

.crumbs {
    display: flex;
    align-items: center;
    gap: 8px;
    margin-left: 12px;
    font-size: 15px;
}

.crumbs .module {
    font-size: 16px;
    color: #2b3650;
}

.crumb-actions {
    display: flex;
    gap: 4px;
    margin-left: auto;
}

/* buttons */
.btn {
    display: flex;
    align-items: center;
    gap: 4px;
    height: 32px;
    padding: 0 12px;
    background: #f5f5f5;
    border: 1px solid #ddd;
    color: #64707a;
    font-size: 13px;
    font-weight: bold;
}

.btn.round {
    padding: 0 11px;
    border-radius: 9px;
}

.btn.wide {
    gap: 6px;
}

.btn.tight {
    padding: 0 8px;
    gap: 3px;
}

.btn:disabled {
    background: #f9f9f9;
    border-color: #ebebeb;
    color: #c8ccd0;
}

.btn-group {
    display: flex;
    gap: 2px;
}

.btn-group.spaced {
    gap: 4px;
}

.btn-group .btn:first-child {
    border-radius: 9px 0 0 9px;
}

.btn-group .btn:last-child {
    border-radius: 0 9px 9px 0;
}

.caret {
    border: 4px solid transparent;
    border-top-color: currentColor;
    border-bottom: 0;
    margin-left: 4px;
}

/* side menu */
.layout {
    flex: 1;
    display: flex;
}

.sidebar {
    width: 42px;
    flex: none;
    background: #fff;
    box-shadow: 1px 0 7px rgba(0, 0, 0, .18);
    color: #64707a;
    z-index: 2;
}

.sidebar a {
    display: flex;
    align-items: center;
    justify-content: center;
    height: 42px;
    padding: 0 0 6px 3px;
}

.sidebar .active {
    background: #e4e4e4;
    border-left: 3px solid #239fdb;
    padding-left: 6px;
    color: #2b3650;
}

/* record header */
.content {
    flex: 1;
    min-width: 0;
    display: flex;
    flex-direction: column;
}

.record {
    background: #fff;
    border-bottom: 1px solid #c9c9cd;
    box-shadow: 0 1px 6px rgba(0, 0, 0, .14);
    color: #64707a;
}

.record-top {
    display: flex;
    align-items: flex-start;
    padding: 15px 16px 0 15px;
    height: 76px;
}

.avatar {
    display: flex;
    align-items: center;
    justify-content: center;
    width: 45px;
    height: 45px;
    border-radius: 12px;
    background: #6bc4b8;
    color: #fff;
}

.record-name {
    margin-left: 15px;
    font-size: 15px;
    line-height: 21px;
}

.record-name h1 {
    margin: 0;
    font-size: 18px;
    line-height: 18px;
    font-weight: normal;
    color: #2b3650;
}

.record-name a {
    display: flex;
    align-items: center;
    gap: 4px;
}

.record-actions {
    display: flex;
    gap: 18px;
    margin-left: auto;
    padding-top: 5px;
}

.tabs {
    display: flex;
    padding-left: 8px;
    height: 44px;
}

.tabs a {
    position: relative;
    display: flex;
    align-items: center;
    padding: 2px 10px 0;
    border-bottom: 3px solid transparent;
}

.tabs .text {
    padding: 2px 12px 0;
    font-size: 16px;
}

.tabs .active {
    color: #239fdb;
    border-bottom-color: #239fdb;
}

.tabs svg {
    height: 23px;
}

.tabs .xs { width: 18px; }
.tabs .s { width: 21px; }
.tabs .m { width: 24px; }
.tabs .l { width: 26px; }

.badge {
    position: absolute;
    top: 1px;
    right: 1px;
    width: 19px;
    height: 19px;
    border-radius: 4px;
    background: #8e44ad;
    color: #fff;
    font-size: 10px;
    font-weight: bold;
    line-height: 18px;
    text-align: center;
}

/* list */
.card {
    margin: 7px 6px 0 16px;
    background: #fff;
}

.card-tools {
    display: flex;
    align-items: flex-start;
    justify-content: space-between;
    height: 80px;
    padding: 17px 17px 0 27px;
}

.pager {
    display: flex;
    align-items: center;
    gap: 8px;
    font-size: 15px;
    color: #64707a;
}

.pager b {
    font-size: 19px;
    line-height: 18px;
}

table {
    width: 100%;
    table-layout: fixed;
    border-collapse: collapse;
    border-top: 2px solid #f3f3f3;
}

.c-actions { width: 115px; }
.c-ref { width: 177px; }
.c-doc { width: 337px; }
.c-cur { width: 170px; }
.c-std { width: 159px; }
.c-acc { width: 146px; }
.c-emp { width: 94px; }

th {
    height: 41px;
    padding: 0 0 0 5px;
    border-bottom: 2px solid #ddd;
    font-weight: normal;
    text-align: left;
    white-space: nowrap;
}

th svg {
    margin-right: 4px;
    color: #bfc1c9;
}

td {
    height: 28px;
    padding: 0 8px 2px;
    border-top: 1px solid #d9d9d9;
    white-space: nowrap;
}

.hover {
    background: #f5f5f5;
}

.filters td {
    height: 45px;
    padding: 0 3px;
    border-top: 0;
}

.filters .go {
    padding-left: 10px;
}

.filters input,
.filters select {
    display: block;
    width: 130px;
    height: 28px;
    background: #f5f5f5;
    border: 1px solid #e3e3e3;
    border-radius: 8px;
}

.filters select {
    height: 34px;
    padding: 0 13px 3px;
    appearance: none;
    font-size: 13px;
    color: #2b3650;
}

.select {
    position: relative;
    display: inline-block;
    vertical-align: middle;
}

.select::after {
    content: "";
    position: absolute;
    right: 7px;
    top: 13px;
    border: 3px solid transparent;
    border-top: 6px solid #808080;
    border-bottom: 0;
}

.search-btn {
    display: block;
    width: 95px;
    height: 24px;
    border: 0;
    border-radius: 12px;
    background: #239fdb;
    box-shadow: 0 2px 4px rgba(0, 0, 0, .35);
    color: #fff;
    font-size: 12px;
    font-weight: bold;
    letter-spacing: 1px;
}

td.row-icons {
    padding: 0 0 0 22px;
    color: #3c3c3c;
}

.row-icons a {
    display: inline-block;
    vertical-align: middle;
    margin-right: 5px;
}

.row-icons svg {
    display: block;
}

.row-icons .grey {
    margin-left: 10px;
    color: #aaa;
}

.row-icons .mid {
    margin-right: 0;
    color: #858585;
}

td.num {
    text-align: right;
    padding-right: 39px;
}

.marked {
    position: relative;
}

/* highlight over the grouped sales */
.mark {
    position: absolute;
    left: 0;
    top: -4px;
    width: 141px;
    height: 89px;
    border: 3px solid #f00;
    border-radius: 2px;
}

.footer {
    display: flex;
    justify-content: center;
    align-items: center;
    gap: 9px;
    height: 25px;
    margin-top: auto;
    padding: 5px 42px 0 0;
    background: #fbfbfb;
    border-top: 1px solid #dcdcdc;
    font-size: 15px;
    color: #64707a;
}

.footer small {
    font-size: 13px;
}

.footer a {
    display: flex;
    align-items: center;
    gap: 4px;
}
```
